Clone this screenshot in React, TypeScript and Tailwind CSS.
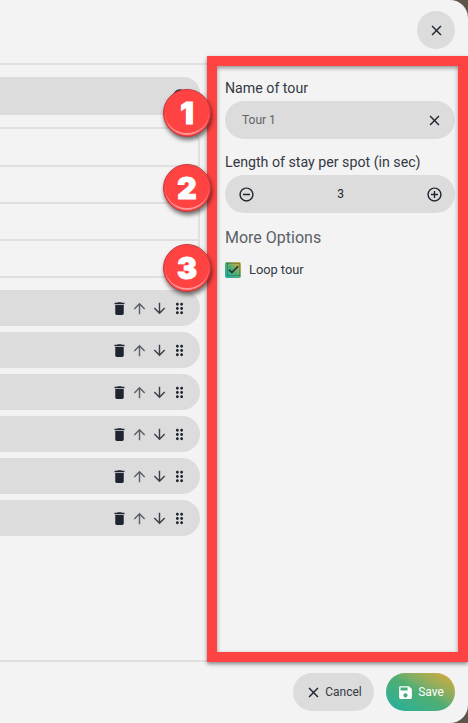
import {
  MdAddCircleOutline,
  MdArrowDownward,
  MdArrowUpward,
  MdCancel,
  MdCheck,
  MdClose,
  MdDelete,
  MdDragIndicator,
  MdRemoveCircleOutline,
  MdSave,
} from "react-icons/md";

function Badge({ n, className }: { n: number; className: string }) {
  return (
    <div
      className={`absolute left-[163px] w-[48px] h-[48px] rounded-full bg-[#ff4343] border border-[#c9383c] shadow-[1px_3px_4px_rgba(0,0,0,0.55)] flex items-center justify-center overflow-hidden ${className}`}
    >
      <span className="font-['Inter',sans-serif] font-black text-[30px] leading-none text-white [-webkit-text-stroke:1px_white]">{n}</span>
      <div className="absolute inset-[1px] rounded-full border-b-2 border-[#ff9a9a]" />
    </div>
  );
}

function TourRow() {
  return (
    <div className="h-[36px] w-[200px] rounded-r-[18px] bg-[#dcdcdc] flex items-center justify-end pr-[12px] gap-[3px] text-[#1e2430]">
      <MdDelete className="w-[17px] h-[17px]" />
      <MdArrowUpward className="w-[17px] h-[17px] text-[#5a5f68]" />
      <MdArrowDownward className="w-[17px] h-[17px] text-[#3a3f4a]" />
      <MdDragIndicator className="w-[17px] h-[17px]" />
    </div>
  );
}

export default function App() {
  return (
    <div className="relative w-[468px] h-[723px] overflow-hidden bg-[#5c5548] font-['Roboto',sans-serif] text-[#343943]">
      <div className="h-full bg-[#f3f3f3] rounded-r-[18px] flex flex-col">
        {/* Header */}
        <div className="h-[63px] shrink-0 flex items-start justify-end pt-[11px] pr-[13px]">
          <button className="w-[38px] h-[38px] rounded-full bg-[#dcdcdc] flex items-center justify-center text-[#1e2430]">
            <MdClose className="w-[17px] h-[17px]" />
          </button>
        </div>

        {/* Body */}
        <div className="flex-1 flex min-h-0">
          <div className="w-[207px] shrink-0 border-t-2 border-[#e0e0e0] pt-[12px]">
            <div className="h-[38px] w-[200px] rounded-r-[16px] bg-[#dcdcdc] flex items-center justify-end pr-[12px] text-[#1e2430]">
              <MdCancel className="w-[16px] h-[16px]" />
            </div>
            <div className="mt-[12px] border-y-2 border-[#e0e0e0] pt-[6px]">
              <div className="w-[200px] border-r-2 border-[#e0e0e0] rounded-tr-[6px] pt-[30px]">
                <div className="h-[37px] border-t-2 border-[#e0e0e0]" />
                <div className="h-[37px] border-t-2 border-[#e0e0e0]" />
                <div className="h-[37px] border-t-2 border-[#e0e0e0]" />
              </div>
            </div>
            <div className="mt-[12px] flex flex-col gap-[6px]">
              <TourRow />
              <TourRow />
              <TourRow />
              <TourRow />
              <TourRow />
              <TourRow />
            </div>
          </div>

          <div className="flex-1 pl-[18px] pr-[13px] pt-[17px]">
            <div className="text-[14.2px] leading-[16px]">Name of tour</div>
            <div className="mt-[5px] h-[38px] rounded-full bg-[#dcdcdc] flex items-center pl-[17px] pr-[12px]">
              <span className="flex-1 text-[12px] text-[#5f6368]">Tour 1</span>
              <MdClose className="w-[17px] h-[17px] text-[#1e2430]" />
            </div>
            <div className="mt-[15px] text-[14.2px] leading-[16px]">Length of stay per spot (in sec)</div>
            <div className="mt-[5px] h-[38px] rounded-full bg-[#dcdcdc] flex items-center justify-between pl-[13px] pr-[12px] text-[#1e2430]">
              <MdRemoveCircleOutline className="w-[17px] h-[17px]" />
              <span className="text-[12px]">3</span>
              <MdAddCircleOutline className="w-[17px] h-[17px]" />
            </div>
            <div className="mt-[15px] text-[16px] leading-[19px] text-[#5a5f68]">More Options</div>
            <div className="mt-[13px] flex items-center gap-[8px]">
              <div className="w-[16px] h-[16px] rounded-[2px] bg-gradient-to-tr from-[#14b0a0] via-[#4fae72] to-[#dca826] flex items-center justify-center text-[#1e2430]">
                <MdCheck className="w-[13px] h-[13px] stroke-current stroke-1" />
              </div>
              <span className="text-[12.8px]">Loop tour</span>
            </div>
          </div>
        </div>

        {/* Footer */}
        <div className="h-[63px] shrink-0 border-t-2 border-[#e0e0e0] flex items-start justify-end gap-[12px] pt-[11px] pr-[13px]">
          <button className="w-[81px] h-[38px] rounded-full bg-[#dcdcdc] flex items-center justify-center gap-[3px] text-[12px]">
            <MdClose className="w-[17px] h-[17px] text-[#1e2430]" />
            Cancel
          </button>
          <button className="w-[69px] h-[38px] rounded-full bg-gradient-to-tr from-[#14b0a0] via-[#4fae72] to-[#dca826] flex items-center justify-center gap-[4px] text-[12px] text-white">
            <MdSave className="w-[17px] h-[17px]" />
            Save
          </button>
        </div>
      </div>

      {/* Annotation overlay */}
      <div className="absolute left-[207px] top-[56px] w-[261px] h-[606px] border-[10px] border-[#ff4343] shadow-[0_2px_4px_rgba(0,0,0,0.45),inset_0_2px_4px_rgba(0,0,0,0.4)]" />
      <Badge n={1} className="top-[89px]" />
      <Badge n={2} className="top-[164px]" />
      <Badge n={3} className="top-[244px]" />
    </div>
  );
}
